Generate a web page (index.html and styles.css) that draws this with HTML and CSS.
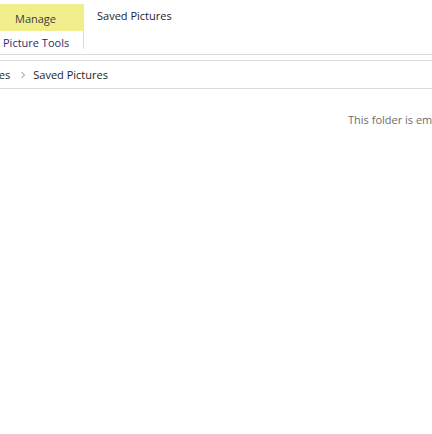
FILE: index.html
```html
<!DOCTYPE html>
<html>
<head>
<meta charset="utf-8">
<link rel="stylesheet" href="styles.css">
</head>
<body>
<div class="window">
  <div class="ribbon">
    <div class="tabs">
      <div class="ctx">
        <div class="manage">Manage</div>
        <div class="ctx-label">Picture Tools</div>
      </div>
      <div class="title">Saved Pictures</div>
    </div>
  </div>
  <div class="address">
    <span class="crumb crumb-cut">Pictures</span>
    <svg class="chev" width="6" height="8" viewBox="0 0 6 8"><path d="M1.5 1 L4.5 4 L1.5 7" fill="none" stroke="#8a8a8a" stroke-width="1"/></svg>
    <span class="crumb">Saved Pictures</span>
  </div>
  <div class="content">
    <div class="empty">This folder is empty.</div>
  </div>
</div>
</body>
</html>
```
FILE: styles.css
```css
html, body {
  margin: 0;
  padding: 0;
  background: #ffffff;
}
body {
  width: 432px;
  height: 434px;
  overflow: hidden;
  font-family: "Open Sans", "Noto Sans", sans-serif;
  font-size: 11px;
}
.window {
  width: 432px;
  overflow: hidden;
}
.ribbon {
  height: 55px;
  border-bottom: 1px solid #dadada;
  box-sizing: border-box;
}
.tabs {
  display: flex;
  align-items: flex-start;
}
.ctx {
  width: 84px;
  display: flex;
  flex-direction: column;
}
.manage {
  margin-top: 4px;
  height: 27px;
  background: #f1ef8c;
  color: #3c3c3c;
  display: flex;
  align-items: center;
  padding-left: 15px;
  padding-top: 1px;
  box-sizing: border-box;
}
.ctx-label {
  height: 18px;
  border-right: 1px solid #dadada;
  color: #2f2a6a;
  padding-left: 3px;
  padding-top: 5px;
  display: flex;
  align-items: center;
  box-sizing: border-box;
}
.title {
  margin-left: 13px;
  height: 31px;
  display: flex;
  align-items: center;
  padding-bottom: 1px;
  box-sizing: border-box;
  color: #1e1e1e;
}
.address {
  margin-top: 5px;
  height: 29px;
  border-top: 1px solid #dadada;
  border-bottom: 1px solid #dadada;
  box-sizing: border-box;
  display: flex;
  align-items: center;
  color: #1e1e1e;
  white-space: nowrap;
}
.crumb-cut {
  margin-left: -31px;
}
.chev {
  margin: 1px 7px 0 10px;
}
.content {
  padding: 23px 0 0 348px;
  white-space: nowrap;
}
.empty {
  color: #6d6d6d;
}
```
